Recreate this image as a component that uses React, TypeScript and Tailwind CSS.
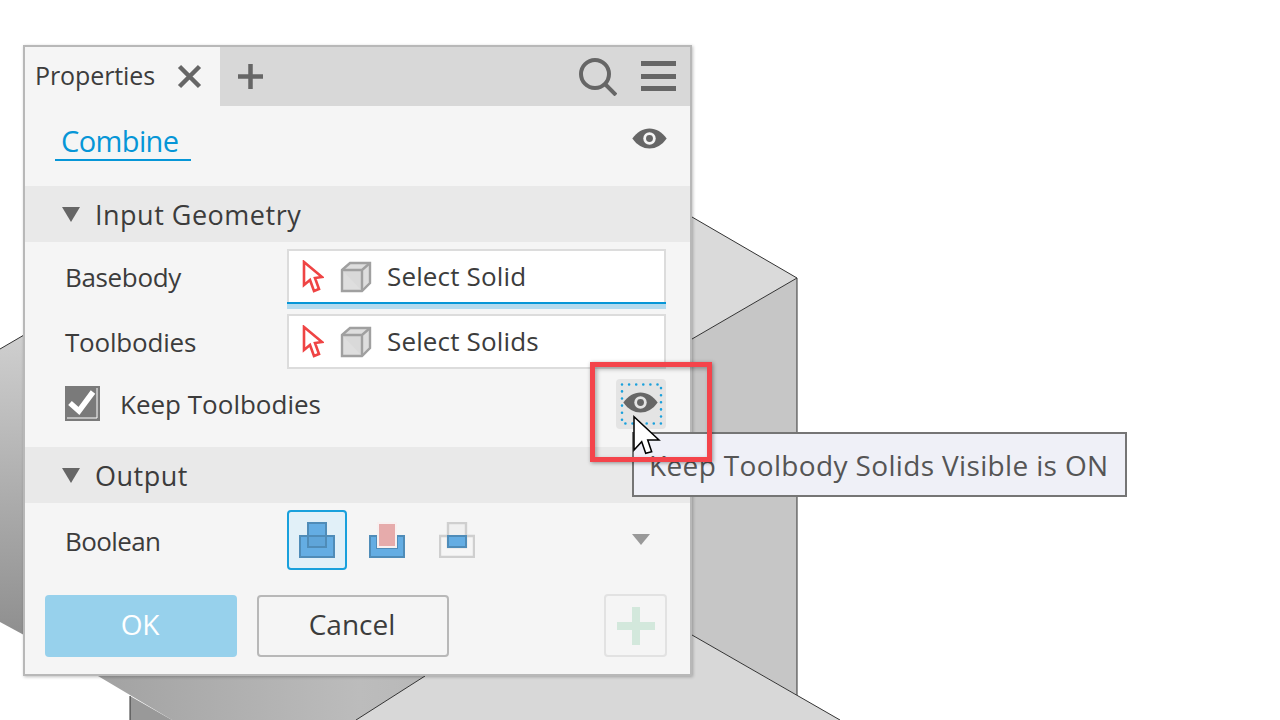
const font = { fontFamily: '"Open Sans", "Noto Sans", sans-serif' };

function EyeIcon({ className, ring }: { className?: string; ring: string }) {
  return (
    <svg viewBox="0 0 36 22" className={className}>
      <path d="M0 11C5 4 11 0.5 18 0.5S31 4 36 11C31 18 25 21.5 18 21.5S5 18 0 11Z" fill="#666" />
      <circle cx="18" cy="11" r="6.5" fill={ring} />
      <circle cx="18" cy="11" r="3.6" fill="#666" />
    </svg>
  );
}

function PickArrow() {
  return (
    <svg viewBox="0 0 22 34" className="w-[22px] h-[34px]">
      <path d="M2 2L2 25L8 20L12 31L17 29L13 18L20 17Z" fill="#fff" stroke="#ef4444" strokeWidth="2.6" />
    </svg>
  );
}

function Cube() {
  return (
    <svg viewBox="0 0 32 32" className="w-8 h-8">
      <path d="M2 9L10 2H30V22L22 30H2Z" fill="#dedede" stroke="#a0a0a0" strokeWidth="2.4" />
      <path d="M2 9H22V30M22 9L30 2" fill="#d9d9d9" stroke="#a0a0a0" strokeWidth="2.4" />
    </svg>
  );
}

function SelectBox({ label, active }: { label: string; active?: boolean }) {
  return (
    <div className="w-[379px] h-[55px] bg-white border-2 border-[#dcdcdc] flex items-center pl-[13px] relative">
      <PickArrow />
      <div className="ml-[16px]">
        <Cube />
      </div>
      <span className="ml-[15px] -mt-[1px] text-[26px] text-[#3c3c3c] tracking-[0.15px]">{label}</span>
      {active && (
        <>
          <div className="absolute left-[-2px] right-[-2px] bottom-[-2px] h-[2px] bg-[#0696d7]" />
          <div className="absolute left-[-2px] right-[-2px] bottom-[-7px] h-[5px] bg-[#b3daee]" />
        </>
      )}
    </div>
  );
}

function Section({ label }: { label: string }) {
  return (
    <div className="h-[56px] bg-[#e9e9e9] flex items-center pl-[37px] gap-[15px]">
      <svg viewBox="0 0 18 15" className="w-[18px] h-[15px]">
        <path d="M0 0H18L9 15Z" fill="#666" />
      </svg>
      <span className="mt-[2px] text-[27px] text-[#3c3c3c] tracking-[0.5px]">{label}</span>
    </div>
  );
}

function Scene() {
  return (
    <svg className="absolute inset-0" width="1280" height="720" viewBox="0 0 1280 720">
      <defs>
        <linearGradient id="side" x1="0" y1="0" x2="0" y2="1">
          <stop offset="0" stopColor="#cfcfcf" />
          <stop offset="1" stopColor="#8f8f8f" />
        </linearGradient>
        <linearGradient id="under" x1="0" y1="0" x2="1" y2="0">
          <stop offset="0" stopColor="#a2a2a2" />
          <stop offset="0.8" stopColor="#bcbcbc" />
          <stop offset="1" stopColor="#b8b8b8" />
        </linearGradient>
      </defs>
      <path d="M692 217L797 278L692 339Z" fill="#dadada" />
      <path d="M692 339L797 278V695L692 635Z" fill="#c6c6c6" />
      <path d="M692 635L840 720H356L425 676H692Z" fill="#d8d8d8" />
      <path d="M0 349L24 335V635L0 622Z" fill="url(#side)" />
      <path d="M98 676L130 695L172 720H356L425 676Z" fill="url(#under)" />
      <path d="M130 696L172 720H130Z" fill="#999" />
      <path d="M692 217L797 278L692 339M797 278V695M692 635L840 720M356 720L425 676M0 349L24 335M130 696V720" stroke="#333" strokeWidth="1" fill="none" />
    </svg>
  );
}

export default function App() {
  return (
    <div className="w-[1280px] h-[720px] bg-white relative overflow-hidden" style={font}>
      <Scene />
      {/* panel */}
      <div className="absolute left-[23px] top-[45px] w-[669px] h-[631px] bg-[#f5f5f5] border-2 border-[#b8b8b8] shadow-[1px_1px_3px_rgba(0,0,0,0.25)] flex flex-col">
        <div className="h-[59px] shrink-0 bg-[#d8d8d8] flex items-stretch">
          <div className="w-[195px] bg-[#f5f5f5] flex items-center pl-[10px]">
            <span className="-mt-[1px] text-[25px] text-[#3c3c3c] tracking-[-0.1px]">Properties</span>
            <svg viewBox="0 0 25 25" className="ml-[22px] -mt-[1px] w-[25px] h-[25px]">
              <path d="M2.5 2.5L22.5 22.5M22.5 2.5L2.5 22.5" stroke="#666" strokeWidth="4.5" />
            </svg>
          </div>
          <svg viewBox="0 0 25 25" className="ml-[18px] -mt-[1px] self-center w-[25px] h-[25px]">
            <path d="M12.5 0V25M0 12.5H25" stroke="#666" strokeWidth="4.5" />
          </svg>
          <div className="ml-auto flex items-center gap-[24px] pr-[14px]">
            <svg viewBox="0 0 38 38" className="w-[38px] h-[38px]">
              <circle cx="16" cy="16" r="14" fill="none" stroke="#666" strokeWidth="4" />
              <path d="M26 26L37 37" stroke="#666" strokeWidth="4" />
            </svg>
            <div className="-mt-[1px] w-[35px] flex flex-col gap-[7.5px]">
              <div className="h-[5px] bg-[#666]" />
              <div className="h-[5px] bg-[#666]" />
              <div className="h-[5px] bg-[#666]" />
            </div>
          </div>
        </div>
        <div className="h-[80px] shrink-0 relative">
          <div className="absolute left-[30px] top-[16px] w-[136px] h-[39px] border-b-2 border-[#0696d7] pl-[6px]">
            <span className="block text-[29px] leading-[38px] text-[#0696d7] tracking-[-0.6px]">Combine</span>
          </div>
          <EyeIcon ring="#f5f5f5" className="absolute right-[23px] top-[22px] w-[35px] h-[21px]" />
        </div>
        <Section label="Input Geometry" />
        <div className="flex flex-col">
          <div className="flex items-center h-[69px] pl-[40px]">
            <span className="mt-[2px] w-[222px] text-[26px] text-[#3c3c3c] tracking-[-0.35px]">Basebody</span>
            <SelectBox label="Select Solid" active />
          </div>
          <div className="flex items-center h-[61px] pl-[40px]">
            <span className="mt-[2px] w-[222px] text-[26px] text-[#3c3c3c] tracking-[-0.2px]">Toolbodies</span>
            <SelectBox label="Select Solids" />
          </div>
          <div className="flex items-center h-[75px] pl-[40px] pb-[12px]">
            <svg viewBox="0 0 35 35" className="w-[35px] h-[35px]">
              <rect width="35" height="35" fill="#7a7a7a" />
              <path d="M32 2V32H2" fill="none" stroke="#fff" strokeWidth="1" />
              <path d="M5 17L14 25L28 6" fill="none" stroke="#fff" strokeWidth="5.5" />
            </svg>
            <span className="ml-[20px] mt-[2px] text-[26px] text-[#3c3c3c]">Keep Toolbodies</span>
          </div>
        </div>
        <Section label="Output" />
        <div className="h-[74px] shrink-0 flex items-center pl-[40px] relative">
          <span className="mt-[2px] w-[222px] text-[26px] text-[#3c3c3c] tracking-[-0.6px]">Boolean</span>
          <div className="w-[60px] h-[60px] rounded-[4px] border-2 border-[#18a0dc] bg-[#e1f0f8] flex items-center justify-center">
            <svg viewBox="0 0 36 36" className="w-[36px] h-[36px]">
              <path d="M1 14H35V35H1Z" fill="#64ade3" stroke="#4f8cb8" strokeWidth="2" />
              <path d="M9 1H27V25H9Z" fill="#64ade3" />
              <path d="M9 14H27V25H9Z" fill="#5fa5d9" />
              <path d="M9 1H27V25H9Z" fill="none" stroke="#4f8cb8" strokeWidth="2" />
              <path d="M8 14H28" stroke="#4f8cb8" strokeWidth="2" />
            </svg>
          </div>
          <svg viewBox="0 0 36 36" className="ml-[22px] w-[36px] h-[36px]">
            <path d="M1 14H8V26H28V14H35V35H1Z" fill="#64ade3" stroke="#4f8cb8" strokeWidth="2" />
            <path d="M9 1H27V25H9Z" fill="#e6abab" stroke="#f8f0f0" strokeWidth="2" />
          </svg>
          <svg viewBox="0 0 36 36" className="ml-[34px] w-[36px] h-[36px]">
            <path d="M1 14H35V35H1Z" fill="#f5f5f5" stroke="#cfcfcf" strokeWidth="2.4" />
            <path d="M9 1H27V25H9Z" fill="#f0f0f0" stroke="#cfcfcf" strokeWidth="2.4" />
            <path d="M9 14H27V25H9Z" fill="#64ade3" stroke="#4f8cb8" strokeWidth="2" />
          </svg>
          <svg viewBox="0 0 18 11" className="absolute left-[607px] top-[31px] w-[18px] h-[11px]">
            <path d="M0 0H18L9 11Z" fill="#999" />
          </svg>
        </div>
        <div className="flex items-center pl-[20px] pr-[23px] pt-[18px]">
          <button className="w-[192px] h-[62px] rounded-[4px] bg-[#97d1ec] text-white text-[28px] tracking-[-0.1px] pb-[4px] pr-[2px]">OK</button>
          <button className="ml-[20px] w-[192px] h-[62px] rounded-[4px] border-2 border-[#b8b8b8] text-[#3c3c3c] text-[28px] pb-[4px] pr-[2px]">Cancel</button>
          <div className="ml-auto -mt-[1px] w-[63px] h-[63px] rounded-[4px] border-2 border-[#e2e2e2] flex items-center justify-center">
            <svg viewBox="0 0 38 38" className="w-[38px] h-[38px]">
              <path d="M19 0V38M0 19H38" stroke="#d3e8dc" strokeWidth="8" />
            </svg>
          </div>
        </div>
      </div>
      {/* tooltip */}
      <div className="absolute left-[632px] top-[432px] w-[495px] h-[65px] bg-[#eff0f7] border-2 border-[#757575] flex items-center pl-[15px]">
        <span className="text-[28px] text-[#555] tracking-[0.35px] whitespace-nowrap">Keep Toolbody Solids Visible is ON</span>
      </div>
      {/* hovered eye */}
      <div className="absolute left-[616px] top-[379px] w-[50px] h-[50px] rounded-[4px] bg-[#e4e4e4] flex items-center justify-center">
        <svg viewBox="0 0 50 50" className="absolute inset-0 w-[50px] h-[50px]">
          <rect x="6" y="5.5" width="39" height="39" fill="none" stroke="#1aa0dc" strokeWidth="2.6" strokeDasharray="0 7.1" strokeLinecap="round" />
        </svg>
        <EyeIcon ring="#e4e4e4" className="relative w-[35px] h-[21px] -mt-[4px] -ml-[2px]" />
      </div>
      {/* highlight */}
      <div className="absolute left-[590px] top-[362px] w-[122px] h-[100px] border-[5px] border-[#f4444b] shadow-[1px_1px_4px_rgba(0,0,0,0.4),inset_2px_2px_4px_rgba(0,0,0,0.3)]" />
      {/* cursor */}
      <svg viewBox="0 0 34 46" className="absolute left-[630px] top-[412px] w-[34px] h-[46px]">
        <path d="M4 4.7V38L11.7 29.7L15.7 41.3L21.7 39.7L17.7 28H29Z" fill="#fff" stroke="#000" strokeWidth="1.5" />
      </svg>
    </div>
  );
}
